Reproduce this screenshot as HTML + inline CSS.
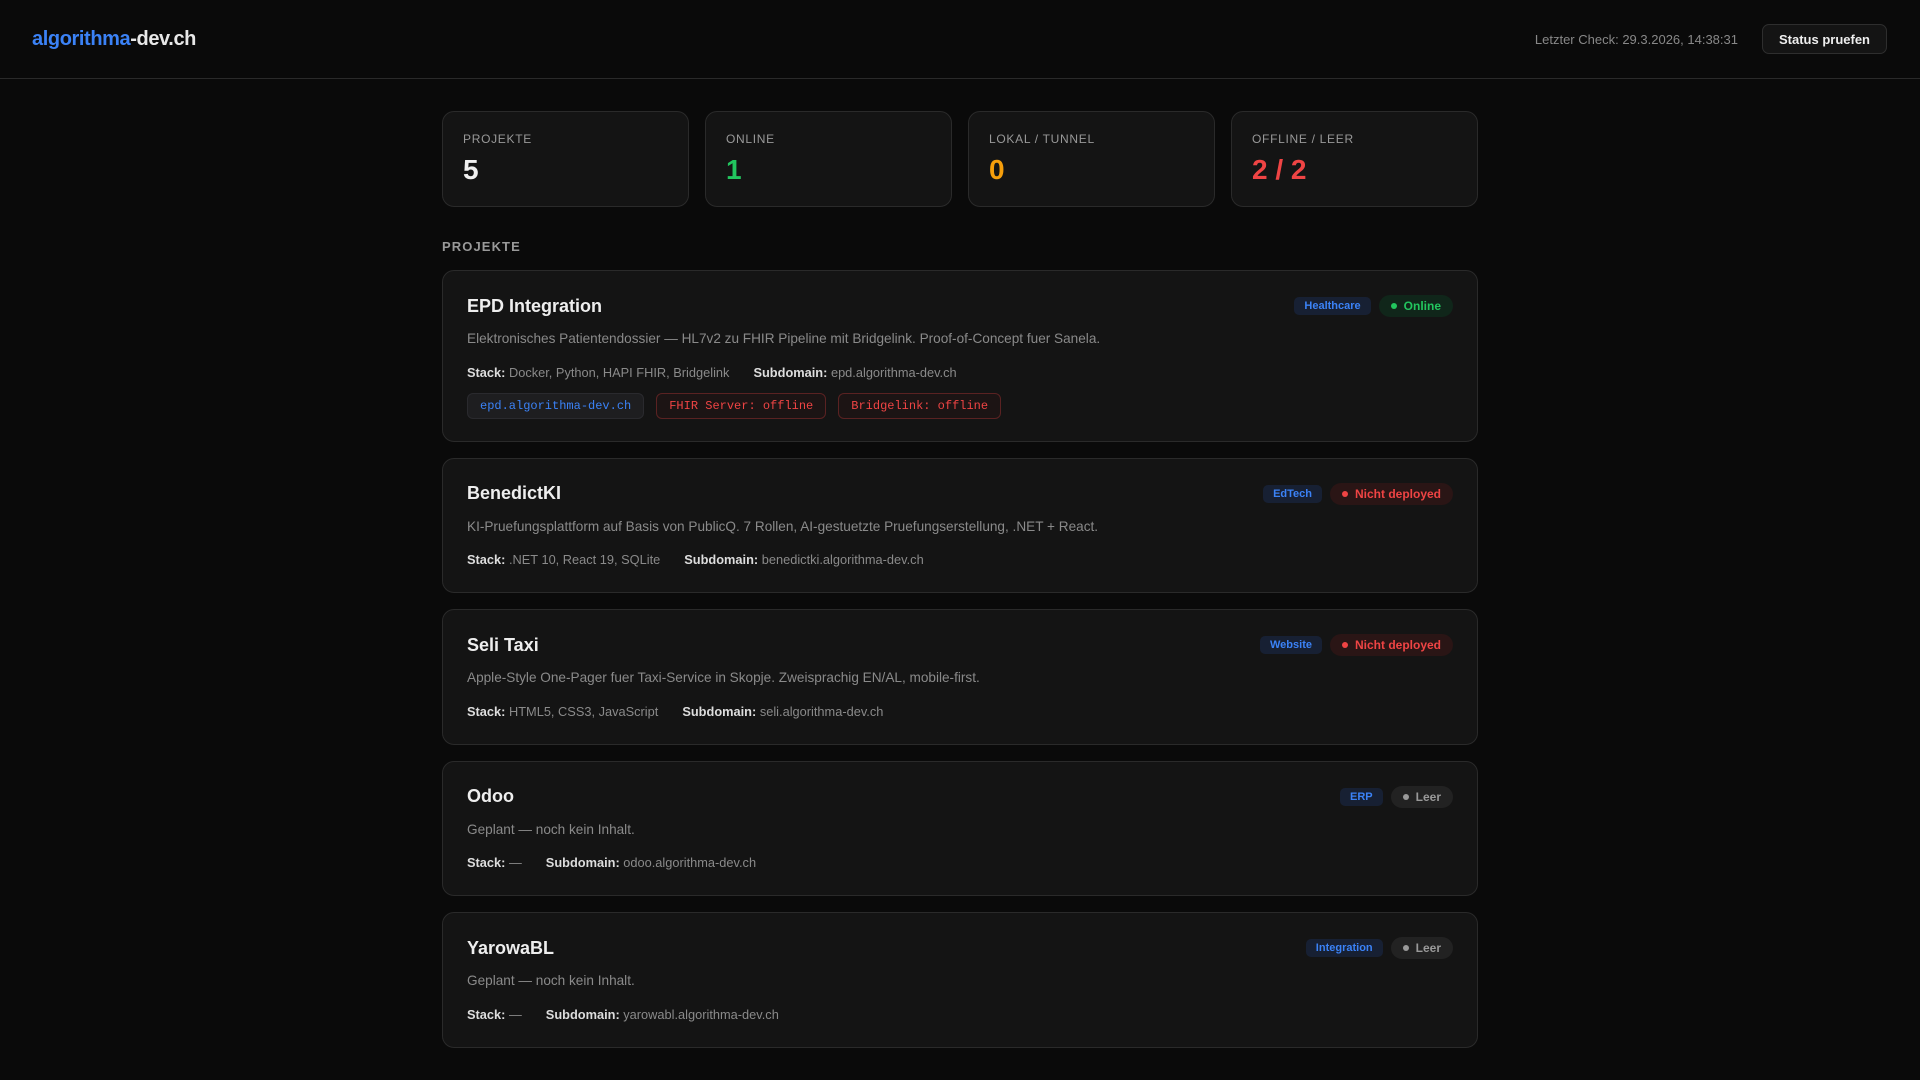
<!DOCTYPE html>
<html><head><meta charset="utf-8"><style>
*{box-sizing:border-box;margin:0;padding:0}
body{width:1920px;height:1080px;background:#0a0a0a;font-family:"Liberation Sans",Arial,sans-serif;color:#e8e8e8;overflow:hidden}
header{height:79px;border-bottom:1px solid #2a2a2a;display:flex;align-items:center;justify-content:space-between;padding:0 33px 0 32px}
.logo{font-size:20px;font-weight:bold;letter-spacing:-0.4px}
.logo span{color:#3b82f6}
.hr{display:flex;align-items:center}
.chk{font-size:13px;color:#888;margin-right:24px}
.btn{height:30px;padding:0 16px;border:1px solid #2e2e2e;border-radius:7px;background:#141414;font-size:13px;font-weight:bold;color:#eee;display:flex;align-items:center}
.wrap{width:1036px;margin:0 auto}
.stats{display:flex;gap:16px;margin-top:32px}
.stat{flex:1;height:96px;background:#141414;border:1px solid #2a2a2a;border-radius:12px;padding:20px 20px}
.stat .l{font-size:12px;color:#999;letter-spacing:0.7px;line-height:14px}
.stat .v{font-size:28px;font-weight:bold;margin-top:8px;line-height:32px}
h2{font-size:13px;font-weight:bold;color:#999;letter-spacing:1.1px;margin:32px 0 15px;line-height:16px}
.card{background:#141414;border:1px solid #2a2a2a;border-radius:12px;padding:24px 24px 22px;margin-bottom:16px}
.top{display:flex;justify-content:space-between;align-items:center;height:22px}
.t{font-size:18px;font-weight:bold;color:#eee}
.bd{display:flex;align-items:center;gap:8px}
.cat{height:18px;padding:0 10px;border-radius:5px;background:#172033;color:#3b82f6;font-size:11px;font-weight:bold;display:flex;align-items:center}
.st{height:22px;padding:0 12px;border-radius:11px;font-size:12px;font-weight:bold;display:flex;align-items:center}
.st i{width:6px;height:6px;border-radius:50%;background:currentColor;margin-right:7px;display:inline-block}
.on{background:#10261a;color:#22c55e}
.nd{background:#2a1515;color:#ef4444}
.le{background:#222;color:#999}
.d{font-size:13.6px;color:#8a8a8a;margin-top:12px;line-height:20px}
.s{font-size:12.8px;color:#8a8a8a;margin-top:13.5px;line-height:20px}
.s b{color:#ddd}
.s .sp{display:inline-block;width:24px}
.tags{display:flex;gap:12px;margin-top:10px}
.tag{height:26px;padding:0 12px;border-radius:6px;font-family:"Liberation Mono",monospace;font-size:12px;display:flex;align-items:center}
.tb{background:#1e1e20;border:1px solid #2a2a2e;color:#3b82f6}
.tr{background:#1c1414;border:1px solid #5a2222;color:#ef4444}
</style></head><body>
<header><div class="logo"><span>algorithma</span>-dev.ch</div>
<div class="hr"><div class="chk">Letzter Check: 29.3.2026, 14:38:31</div><div class="btn">Status pruefen</div></div></header>
<div class="wrap">
<div class="stats">
<div class="stat"><div class="l">PROJEKTE</div><div class="v" style="color:#f0f0f0">5</div></div>
<div class="stat"><div class="l">ONLINE</div><div class="v" style="color:#22c55e">1</div></div>
<div class="stat"><div class="l">LOKAL / TUNNEL</div><div class="v" style="color:#f59e0b">0</div></div>
<div class="stat"><div class="l">OFFLINE / LEER</div><div class="v" style="color:#ef4444">2 / 2</div></div>
</div>
<h2>PROJEKTE</h2>
<div class="card"><div class="top"><div class="t">EPD Integration</div><div class="bd"><div class="cat">Healthcare</div><div class="st on"><i></i>Online</div></div></div>
<div class="d">Elektronisches Patientendossier — HL7v2 zu FHIR Pipeline mit Bridgelink. Proof-of-Concept fuer Sanela.</div>
<div class="s"><b>Stack:</b> Docker, Python, HAPI FHIR, Bridgelink<span class="sp"></span><b>Subdomain:</b> epd.algorithma-dev.ch</div>
<div class="tags"><div class="tag tb">epd.algorithma-dev.ch</div><div class="tag tr">FHIR Server: offline</div><div class="tag tr">Bridgelink: offline</div></div></div>
<div class="card"><div class="top"><div class="t">BenedictKI</div><div class="bd"><div class="cat">EdTech</div><div class="st nd"><i></i>Nicht deployed</div></div></div>
<div class="d">KI-Pruefungsplattform auf Basis von PublicQ. 7 Rollen, AI-gestuetzte Pruefungserstellung, .NET + React.</div>
<div class="s"><b>Stack:</b> .NET 10, React 19, SQLite<span class="sp"></span><b>Subdomain:</b> benedictki.algorithma-dev.ch</div></div>
<div class="card"><div class="top"><div class="t">Seli Taxi</div><div class="bd"><div class="cat">Website</div><div class="st nd"><i></i>Nicht deployed</div></div></div>
<div class="d">Apple-Style One-Pager fuer Taxi-Service in Skopje. Zweisprachig EN/AL, mobile-first.</div>
<div class="s"><b>Stack:</b> HTML5, CSS3, JavaScript<span class="sp"></span><b>Subdomain:</b> seli.algorithma-dev.ch</div></div>
<div class="card"><div class="top"><div class="t">Odoo</div><div class="bd"><div class="cat">ERP</div><div class="st le"><i></i>Leer</div></div></div>
<div class="d">Geplant — noch kein Inhalt.</div>
<div class="s"><b>Stack:</b> —<span class="sp"></span><b>Subdomain:</b> odoo.algorithma-dev.ch</div></div>
<div class="card"><div class="top"><div class="t">YarowaBL</div><div class="bd"><div class="cat">Integration</div><div class="st le"><i></i>Leer</div></div></div>
<div class="d">Geplant — noch kein Inhalt.</div>
<div class="s"><b>Stack:</b> —<span class="sp"></span><b>Subdomain:</b> yarowabl.algorithma-dev.ch</div></div>
</div>
</body></html>
